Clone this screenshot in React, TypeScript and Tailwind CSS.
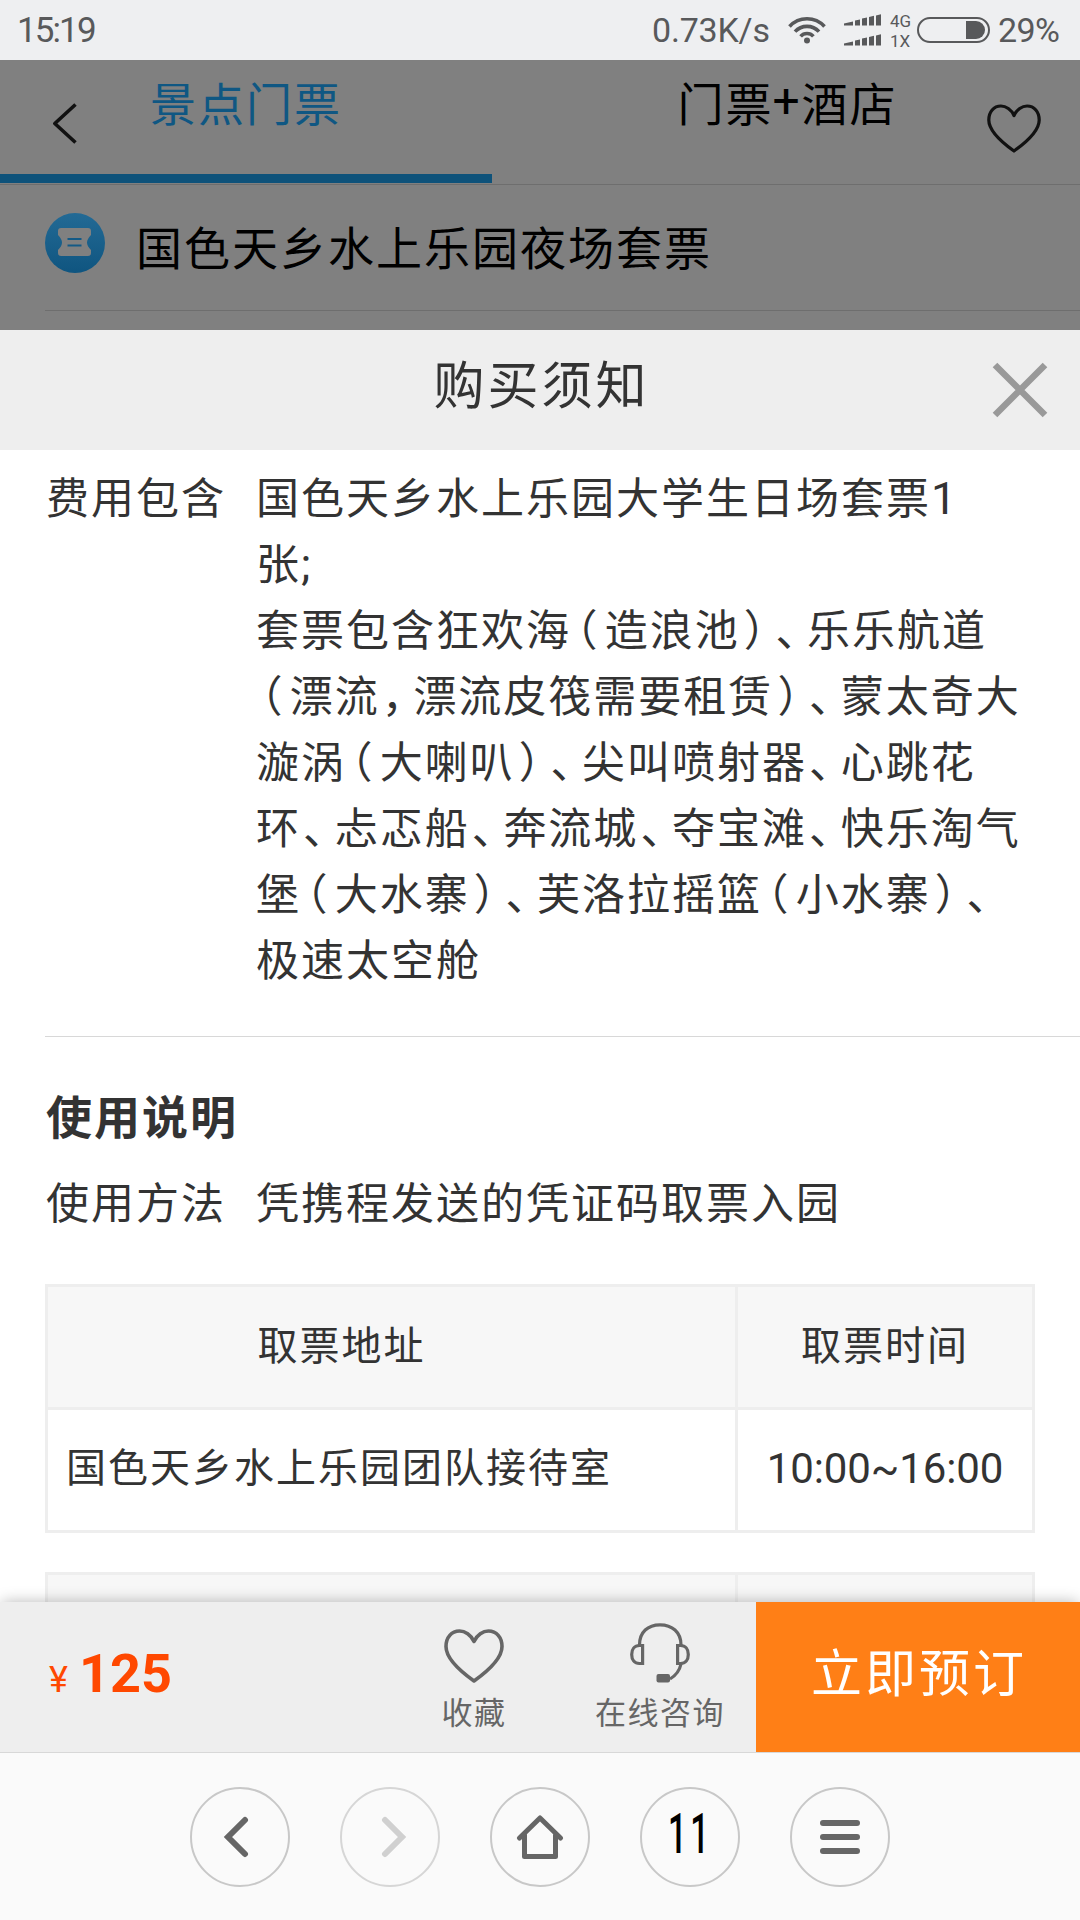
import React from "react";

const CJK = "font-['Noto_Sans_CJK_SC',sans-serif]";

/* Full-width punctuation set on a narrower advance than the ideographs. */
function Punct({ ch }: { ch: string }) {
  const pad = ch === "（" ? "pl-[5px]" : ch === "）" ? "pl-[4px]" : "pl-[2px]";
  return (
    <span className={"inline-block w-[33.7px] tracking-normal [font-feature-settings:'halt'] " + pad}>{ch}</span>
  );
}

function Line({ text }: { text: string }) {
  return (
    <div className="h-[66px] whitespace-nowrap">
      {text.split(/([（）、，]|[0-9;]+)/).map((part, i) => {
        if (/^[（）、，]$/.test(part)) return <Punct key={i} ch={part} />;
        if (/^[0-9;]+$/.test(part))
          return (
            <span key={i} className="font-[Roboto] text-[45px] leading-none tracking-normal">
              {part}
            </span>
          );
        return <React.Fragment key={i}>{part}</React.Fragment>;
      })}
    </div>
  );
}

const included = [
  "国色天乡水上乐园大学生日场套票1",
  "张;",
  "套票包含狂欢海（造浪池）、乐乐航道",
  "（漂流，漂流皮筏需要租赁）、蒙太奇大",
  "漩涡（大喇叭）、尖叫喷射器、心跳花",
  "环、忐忑船、奔流城、夺宝滩、快乐淘气",
  "堡（大水寨）、芙洛拉摇篮（小水寨）、",
  "极速太空舱",
];

function Signal() {
  return (
    <svg width="38" height="12" viewBox="0 0 38 12" fill="#58595b">
      <path d="M0 9.6L9 7.6V11.4H0zM11 6.6L16 5.4V11.4H11zM18 4.6L23 3.4V11.4H18zM25 3L30 1.8V11.4H25zM32 1.4L37 0.2V11.4H32z" />
    </svg>
  );
}

function StatusBar() {
  return (
    <header className="flex h-[60px] items-center bg-[#eeeff1] px-[17px] font-[Roboto] text-[35px] leading-none text-[#58595b]">
      <span className="w-[90px] tracking-[-1.9px]">15:19</span>
      <span className="ml-[545px] w-[136px] whitespace-nowrap text-[34px] tracking-[-0.2px]">0.73K/s</span>
      <svg className="shrink-0" width="38" height="28" viewBox="0 0 38 28" fill="none" stroke="#58595b" strokeWidth="3.6">
        <path d="M1.5 10.5C11 .2 27 .2 36.5 10.5M7 15.6C13.5 8.6 24.5 8.6 31 15.6M12.6 20.4C16 16.6 22 16.6 25.4 20.4" />
        <circle cx="19" cy="24.6" r="3" fill="#58595b" stroke="none" />
      </svg>
      <div className="ml-[18px] flex flex-col gap-2">
        <Signal />
        <Signal />
      </div>
      <div className="ml-[8px] mt-[2px] flex w-[27px] flex-col gap-1 text-[17px] leading-[16px]">
        <span>4G</span>
        <span>1X</span>
      </div>
      <svg className="shrink-0" width="73" height="26" viewBox="0 0 73 26">
        <rect x="1" y="1" width="71" height="24" rx="12" fill="none" stroke="#58595b" strokeWidth="2" />
        <path d="M49 4H59A9 9 0 0 1 59 22H49z" fill="#58595b" />
      </svg>
      <span className="ml-[8px] whitespace-nowrap text-[34px] tracking-[-0.6px]">29%</span>
    </header>
  );
}

function Heart({ className, color }: { className: string; color: string }) {
  return (
    <svg className={className} viewBox="0 0 60 54" fill="none" stroke={color} strokeWidth="3.6" strokeLinejoin="round">
      <path d="M30 12.5C27 6 21 2 15.5 2C7.500 2 2 8.500 2 17.500C2 30 16 42 30 52C44 42 58 30 58 17.500C58 8.500 52.500 2 44.500 2C39 2 33 6 30 12.500Z" />
    </svg>
  );
}

function DimmedPage() {
  return (
    <section className="h-[270px] bg-[#808080] text-[46px] leading-[60px] tracking-[2px]">
      <div className="relative flex h-[125px] border-b border-[#6e6e6e]">
        <svg className="absolute left-[52px] top-[43px]" width="26" height="41" viewBox="0 0 26 41" fill="none" stroke="#111" strokeWidth="3.6">
          <path d="M23.500 1.500L2.800 20.500L23.500 39.500" strokeLinejoin="round" />
        </svg>
        <div className="h-[123px] w-[492px] border-b-[9px] border-[#0e527a] pt-[11px] text-center text-[#0f5783]">
          景点门票
        </div>
        <div className="flex flex-1 justify-center pl-[3px] pt-[11px] text-black">
          <span>门票</span>
          <span className="-ml-[1px] w-[29px] font-[Roboto] text-[48px] tracking-normal">+</span>
          <span>酒店</span>
        </div>
        <Heart className="absolute left-[987px] top-[44px] h-[49px] w-[54px]" color="#111" />
      </div>
      <div className="ml-[45px] flex h-[126px] items-center border-b border-[#6e6e6e]">
        <svg className="-mt-[9px]" width="60" height="60" viewBox="0 0 60 60">
          <defs>
            <linearGradient id="disc" x1="0" y1="0" x2="0" y2="1">
              <stop offset="0" stopColor="#236a95" />
              <stop offset="1" stopColor="#0f5580" />
            </linearGradient>
          </defs>
          <circle cx="30" cy="30" r="30" fill="url(#disc)" />
          <path
            d="M16 15H43Q46 15 46 18V22Q42 26 42 29.500Q42 33 46 37V40Q46 43 43 43H16Q13 43 13 40V37Q17 33 17 29.500Q17 26 13 22V18Q13 15 16 15Z"
            fill="#808080"
          />
          <path d="M22.500 26H36.500M22.500 32.500H36.500" stroke="#145a86" strokeWidth="2" />
        </svg>
        <span className="-mt-[6px] ml-[31px] text-black">国色天乡水上乐园夜场套票</span>
      </div>
    </section>
  );
}

function Row({ label, children }: { label: string; children: React.ReactNode }) {
  return (
    <div className="flex text-[43px] leading-[66px] tracking-[2px]">
      <div className="w-[210px] shrink-0">{label}</div>
      <div>{children}</div>
    </div>
  );
}

const cell = "flex items-center border-b-[3px] border-r-[3px] border-[#eee] ";

function PickupTable({ heads, place, time }: { heads?: [string, string]; place?: string; time?: string }) {
  return (
    <div className="grid w-[990px] grid-cols-[690px_297px] grid-rows-[123px_123px] border-l-[3px] border-t-[3px] border-[#eee] text-[40px] leading-[60px] tracking-[2px]">
      <div className={cell + "justify-center bg-[#f7f7f7] pb-[9px] pr-[100px]"}>{heads?.[0]}</div>
      <div className={cell + "justify-center bg-[#f7f7f7] pb-[9px]"}>{heads?.[1]}</div>
      <div className={cell + "pb-[10px] pl-[18px]"}>{place}</div>
      <div className={cell + "justify-center pb-[3px] font-[Roboto] text-[42px] tracking-[-0.1px]"}>{time}</div>
    </div>
  );
}

function ActionBar() {
  return (
    <footer className="relative flex h-[150px] shrink-0 bg-[#eee] shadow-[0_-2px_14px_-2px_rgba(0,0,0,0.28)]">
      <div className="flex w-[412px] items-baseline pl-[49px] pt-[36px] text-[#ff4800]">
        <span className="w-[30px] font-[Roboto] text-[36px]">¥</span>
        <span className="font-[Roboto] text-[54px] font-bold leading-[72px]">125</span>
      </div>
      <div className="flex w-[124px] flex-col items-center text-[31px] leading-[40px] tracking-[1.5px] text-[#666]">
        <Heart className="mt-[27px] h-[54px] w-[60px]" color="#666" />
        <span className="mt-[8px]">收藏</span>
      </div>
      <div className="flex w-[220px] flex-col items-center pl-[28px] text-[31px] leading-[40px] tracking-[1.5px] text-[#666]">
        <svg className="mt-[20px]" width="60" height="61" viewBox="0 0 60 61" fill="none" stroke="#666" strokeWidth="3.200">
          <path d="M9.500 23C9.500 10 18 2.800 30 2.800S51 10 51 23" />
          <path d="M12.600 23.500V41.500H9.500C4.500 41.500 1.700 38 1.700 32.500S4.500 23.500 9.500 23.500ZM47.600 23.500V41.500H50.500C55.500 41.500 58.300 38 58.300 32.500S55.500 23.500 50.500 23.500Z" />
          <path d="M51 42C49.500 49 45 54 40 57" />
          <rect x="26.500" y="52" width="13.500" height="8.600" rx="2" fill="#666" stroke="none" />
        </svg>
        <span className="mt-[8px]">在线咨询</span>
      </div>
      <div className="flex flex-1 items-center justify-center bg-[#ff7f16] pb-[13px] pl-[2px] text-[51px] tracking-[3px] text-white">
        立即预订
      </div>
    </footer>
  );
}

function NavButton({ children, faded }: { children: React.ReactNode; faded?: boolean }) {
  return (
    <div
      className={
        "flex size-[100px] items-center justify-center rounded-full border-2 " +
        (faded ? "border-[#d6d6d6] text-[#d0d0d0]" : "border-[#c8c8c8] text-[#666]")
      }
    >
      {children}
    </div>
  );
}

function BrowserNav() {
  return (
    <nav className="relative flex h-[168px] shrink-0 items-center justify-center gap-[50px] border-t border-[#d8d8d8] bg-[#fafafa]">
      <NavButton>
        <svg className="-ml-[8px]" width="26" height="42" viewBox="0 0 26 42" fill="none" stroke="currentColor" strokeWidth="6" strokeLinecap="round">
          <path d="M22 4L5 21L22 38" />
        </svg>
      </NavButton>
      <NavButton faded>
        <svg className="ml-[8px]" width="26" height="42" viewBox="0 0 26 42" fill="none" stroke="currentColor" strokeWidth="6" strokeLinecap="round">
          <path d="M4 4L21 21L4 38" />
        </svg>
      </NavButton>
      <NavButton>
        <svg width="48" height="48" viewBox="0 0 48 48" fill="none" stroke="currentColor" strokeWidth="5" strokeLinecap="round" strokeLinejoin="round">
          <path d="M3.500 25L24 5L44.500 25M8.500 22V43.500H39.500V22" />
        </svg>
      </NavButton>
      <NavButton>
        <span className="-mt-[4px] inline-block scale-x-60 font-[Roboto] text-[55px] font-medium leading-none tracking-[6px] text-black">
          11
        </span>
      </NavButton>
      <NavButton>
        <div className="flex flex-col gap-2">
          <div className="h-[6px] w-[40px] rounded-full bg-[#666]" />
          <div className="h-[6px] w-[40px] rounded-full bg-[#666]" />
          <div className="h-[6px] w-[40px] rounded-full bg-[#666]" />
        </div>
      </NavButton>
    </nav>
  );
}

export default function App() {
  return (
    <div className={"flex h-[1920px] w-[1080px] flex-col overflow-hidden bg-white text-[#333] " + CJK}>
      <StatusBar />
      <DimmedPage />
      <div className="relative flex h-[120px] shrink-0 justify-center bg-[#eee] pl-[3px] pt-[17px] text-[51px] leading-[70px] tracking-[3px]">
        购买须知
        <svg className="absolute left-[992px] top-[32px]" width="56" height="56" viewBox="0 0 56 56" stroke="#999" strokeWidth="6.500">
          <path d="M3 3L53 53M53 3L3 53" />
        </svg>
      </div>
      <main className="min-h-0 flex-1 overflow-hidden pl-[45px]">
        <div className="border-b border-[#d8d8d8] pb-[46px] pl-[1px] pt-[12px]">
          <Row label="费用包含">
            {included.map((t) => (
              <Line key={t} text={t} />
            ))}
          </Row>
        </div>
        <h2 className="mt-[44px] pl-[1px] text-[46px] font-bold leading-[66px] tracking-[2px]">使用说明</h2>
        <div className="mt-[20px] pl-[1px]">
          <Row label="使用方法">凭携程发送的凭证码取票入园</Row>
        </div>
        <div className="mt-[51px] flex flex-col gap-[39px]">
          <PickupTable heads={["取票地址", "取票时间"]} place="国色天乡水上乐园团队接待室" time="10:00~16:00" />
          <PickupTable />
        </div>
      </main>
      <ActionBar />
      <BrowserNav />
    </div>
  );
}
